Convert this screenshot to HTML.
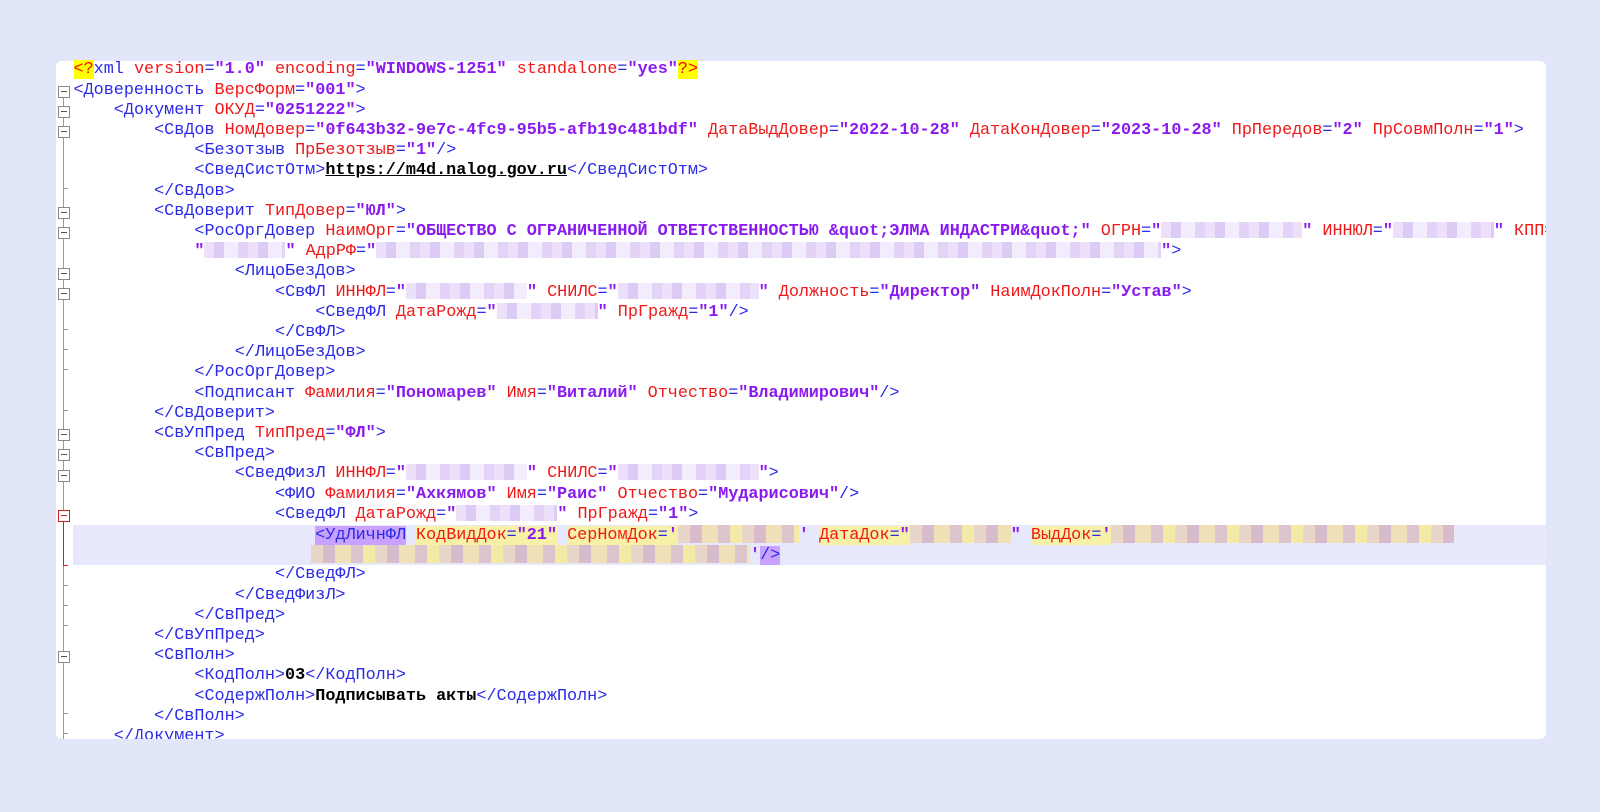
<!DOCTYPE html>
<html><head><meta charset="utf-8"><style>
html,body{margin:0;padding:0;background:#e1e7f8;width:1600px;height:812px;overflow:hidden}
.panel{position:absolute;left:56px;top:61px;width:1490px;height:678px;background:#fff;border-radius:6px;overflow:hidden}
.r{position:absolute;height:20.2px;line-height:20.2px;white-space:pre;font-family:"Liberation Mono","DejaVu Sans Mono",monospace;font-size:16.8px;color:#2a2ae8}
.t{color:#2a2ae8}.a{color:#f01818}.v{color:#8a1af0;font-weight:bold}.x{color:#000;font-weight:bold}
.b{display:inline-block;height:16px;vertical-align:-3px;background:repeating-linear-gradient(90deg,#ece0fa 0 10px,#dccbf5 10px 20px,#f3ecfc 20px 34px,#e3d3f7 34px 44px)}
.bp{display:inline-block;height:18px;vertical-align:-4px;background:repeating-linear-gradient(90deg,#e8d6c8 0 12px,#d8bccc 12px 24px,#efe0b8 24px 40px,#dcc4cc 40px 52px,#f2eaa8 52px 64px)}
.hl{position:absolute;left:17px;top:464px;width:1480px;height:40.4px;background:#e8e8fc}
.fold{position:absolute;left:2px;width:10px;height:10px;border:1px solid #8a8a8a;background:#fff}
.fold:after{content:"";position:absolute;left:2px;top:4px;width:6px;height:1px;background:#555}
.fold.red{border-color:#d02020}.fold.red:after{background:#d02020}
.vl{position:absolute;left:7px;width:1px;background:#9a9a9a}
.tk{position:absolute;left:7px;width:5px;height:1px;background:#9a9a9a}
.yb{background:#f6f1a6}.pb{background:#c9a2ff}
.clip{position:absolute;left:0;top:0;width:1546px;height:739px;overflow:hidden}
</style></head><body>
<div class="panel">
<div class="vl" style="top:30px;height:650px"></div>
<div class="vl" style="top:450px;height:54px;background:#d02020"></div>
<div class="tk" style="top:504px;background:#d02020"></div>
<div class="fold" style="top:25px"></div>
<div class="fold" style="top:45px"></div>
<div class="fold" style="top:65px"></div>
<div class="fold" style="top:146px"></div>
<div class="fold" style="top:166px"></div>
<div class="fold" style="top:207px"></div>
<div class="fold" style="top:227px"></div>
<div class="fold" style="top:368px"></div>
<div class="fold" style="top:388px"></div>
<div class="fold" style="top:409px"></div>
<div class="fold red" style="top:449px"></div>
<div class="fold" style="top:590px"></div>
<div class="tk" style="top:127px"></div><div class="tk" style="top:268px"></div><div class="tk" style="top:288px"></div><div class="tk" style="top:308px"></div><div class="tk" style="top:349px"></div><div class="tk" style="top:524px"></div><div class="tk" style="top:544px"></div><div class="tk" style="top:564px"></div><div class="tk" style="top:652px"></div><div class="tk" style="top:672px"></div>
<div class="hl"></div>
</div>
<div class="clip"><div style="position:absolute;left:0;top:2px">
<div class="r" style="left:73.5px;top:58.3px"><span style="background:#ffff00;color:#ff0000">&lt;?</span><span class="t">xml</span> <span class="a">version</span>=<span class="v">"1.0"</span> <span class="a">encoding</span>=<span class="v">"WINDOWS-1251"</span> <span class="a">standalone</span>=<span class="v">"yes"</span><span style="background:#ffff00;color:#ff0000">?&gt;</span></div>
<div class="r" style="left:73.5px;top:78.5px">&lt;Доверенность <span class="a">ВерсФорм</span>=<span class="v">"001"</span>&gt;</div>
<div class="r" style="left:113.8px;top:98.7px">&lt;Документ <span class="a">ОКУД</span>=<span class="v">"0251222"</span>&gt;</div>
<div class="r" style="left:154.1px;top:118.9px">&lt;СвДов <span class="a">НомДовер</span>=<span class="v">"0f643b32-9e7c-4fc9-95b5-afb19c481bdf"</span> <span class="a">ДатаВыдДовер</span>=<span class="v">"2022-10-28"</span> <span class="a">ДатаКонДовер</span>=<span class="v">"2023-10-28"</span> <span class="a">ПрПередов</span>=<span class="v">"2"</span> <span class="a">ПрСовмПолн</span>=<span class="v">"1"</span>&gt;</div>
<div class="r" style="left:194.4px;top:139.1px">&lt;Безотзыв <span class="a">ПрБезотзыв</span>=<span class="v">"1"</span>/&gt;</div>
<div class="r" style="left:194.4px;top:159.3px">&lt;СведСистОтм&gt;<span class="x" style="text-decoration:underline">https://m4d.nalog.gov.ru</span>&lt;/СведСистОтм&gt;</div>
<div class="r" style="left:154.1px;top:179.5px">&lt;/СвДов&gt;</div>
<div class="r" style="left:154.1px;top:199.7px">&lt;СвДоверит <span class="a">ТипДовер</span>=<span class="v">"ЮЛ"</span>&gt;</div>
<div class="r" style="left:194.4px;top:219.9px">&lt;РосОргДовер <span class="a">НаимОрг</span>=<span class="v">"ОБЩЕСТВО С ОГРАНИЧЕННОЙ ОТВЕТСТВЕННОСТЬЮ &amp;quot;ЭЛМА ИНДАСТРИ&amp;quot;"</span> <span class="a">ОГРН</span>=<span class="v">"</span><span class="b" style="width:141px"></span><span class="v">"</span> <span class="a">ИННЮЛ</span>=<span class="v">"</span><span class="b" style="width:101px"></span><span class="v">"</span> <span class="a">КПП</span>=</div>
<div class="r" style="left:194.4px;top:240.1px"><span class="v">"</span><span class="b" style="width:81px"></span><span class="v">"</span> <span class="a">АдрРФ</span>=<span class="v">"</span><span class="b" style="width:785px"></span><span class="v">"</span>&gt;</div>
<div class="r" style="left:234.7px;top:260.3px">&lt;ЛицоБезДов&gt;</div>
<div class="r" style="left:275px;top:280.5px">&lt;СвФЛ <span class="a">ИННФЛ</span>=<span class="v">"</span><span class="b" style="width:121px"></span><span class="v">"</span> <span class="a">СНИЛС</span>=<span class="v">"</span><span class="b" style="width:141px"></span><span class="v">"</span> <span class="a">Должность</span>=<span class="v">"Директор"</span> <span class="a">НаимДокПолн</span>=<span class="v">"Устав"</span>&gt;</div>
<div class="r" style="left:315.3px;top:300.7px">&lt;СведФЛ <span class="a">ДатаРожд</span>=<span class="v">"</span><span class="b" style="width:101px"></span><span class="v">"</span> <span class="a">ПрГражд</span>=<span class="v">"1"</span>/&gt;</div>
<div class="r" style="left:275px;top:320.9px">&lt;/СвФЛ&gt;</div>
<div class="r" style="left:234.7px;top:341.1px">&lt;/ЛицоБезДов&gt;</div>
<div class="r" style="left:194.4px;top:361.3px">&lt;/РосОргДовер&gt;</div>
<div class="r" style="left:194.4px;top:381.5px">&lt;Подписант <span class="a">Фамилия</span>=<span class="v">"Пономарев"</span> <span class="a">Имя</span>=<span class="v">"Виталий"</span> <span class="a">Отчество</span>=<span class="v">"Владимирович"</span>/&gt;</div>
<div class="r" style="left:154.1px;top:401.7px">&lt;/СвДоверит&gt;</div>
<div class="r" style="left:154.1px;top:421.9px">&lt;СвУпПред <span class="a">ТипПред</span>=<span class="v">"ФЛ"</span>&gt;</div>
<div class="r" style="left:194.4px;top:442.1px">&lt;СвПред&gt;</div>
<div class="r" style="left:234.7px;top:462.3px">&lt;СведФизЛ <span class="a">ИННФЛ</span>=<span class="v">"</span><span class="b" style="width:121px"></span><span class="v">"</span> <span class="a">СНИЛС</span>=<span class="v">"</span><span class="b" style="width:141px"></span><span class="v">"</span>&gt;</div>
<div class="r" style="left:275px;top:482.5px">&lt;ФИО <span class="a">Фамилия</span>=<span class="v">"Ахкямов"</span> <span class="a">Имя</span>=<span class="v">"Раис"</span> <span class="a">Отчество</span>=<span class="v">"Мударисович"</span>/&gt;</div>
<div class="r" style="left:275px;top:502.7px">&lt;СведФЛ <span class="a">ДатаРожд</span>=<span class="v">"</span><span class="b" style="width:101px"></span><span class="v">"</span> <span class="a">ПрГражд</span>=<span class="v">"1"</span>&gt;</div>
<div class="r" style="left:315.3px;top:522.9px"><span class="pb">&lt;УдЛичнФЛ</span> <span class="yb"><span class="a">КодВидДок</span>=<span class="v">"21"</span></span> <span class="yb"><span class="a">СерНомДок</span>=<span class="v">'</span></span><span class="bp" style="width:121px"></span><span class="v">'</span> <span class="yb"><span class="a">ДатаДок</span>=<span class="v">"</span></span><span class="bp" style="width:101px"></span><span class="v">"</span> <span class="yb"><span class="a">ВыдДок</span>=<span class="v">'</span></span><span class="bp" style="width:343px"></span></div>
<div class="r" style="left:311px;top:543.1px"><span class="bp" style="width:439px"></span><span class="v">'</span><span class="pb">/&gt;</span></div>
<div class="r" style="left:275px;top:563.3px">&lt;/СведФЛ&gt;</div>
<div class="r" style="left:234.7px;top:583.5px">&lt;/СведФизЛ&gt;</div>
<div class="r" style="left:194.4px;top:603.7px">&lt;/СвПред&gt;</div>
<div class="r" style="left:154.1px;top:623.9px">&lt;/СвУпПред&gt;</div>
<div class="r" style="left:154.1px;top:644.1px">&lt;СвПолн&gt;</div>
<div class="r" style="left:194.4px;top:664.3px">&lt;КодПолн&gt;<span class="x">03</span>&lt;/КодПолн&gt;</div>
<div class="r" style="left:194.4px;top:684.5px">&lt;СодержПолн&gt;<span class="x">Подписывать акты</span>&lt;/СодержПолн&gt;</div>
<div class="r" style="left:154.1px;top:704.7px">&lt;/СвПолн&gt;</div>
<div class="r" style="left:113.8px;top:724.9px;height:12px;overflow:hidden">&lt;/Документ&gt;</div>
</div></div>
</body></html>
